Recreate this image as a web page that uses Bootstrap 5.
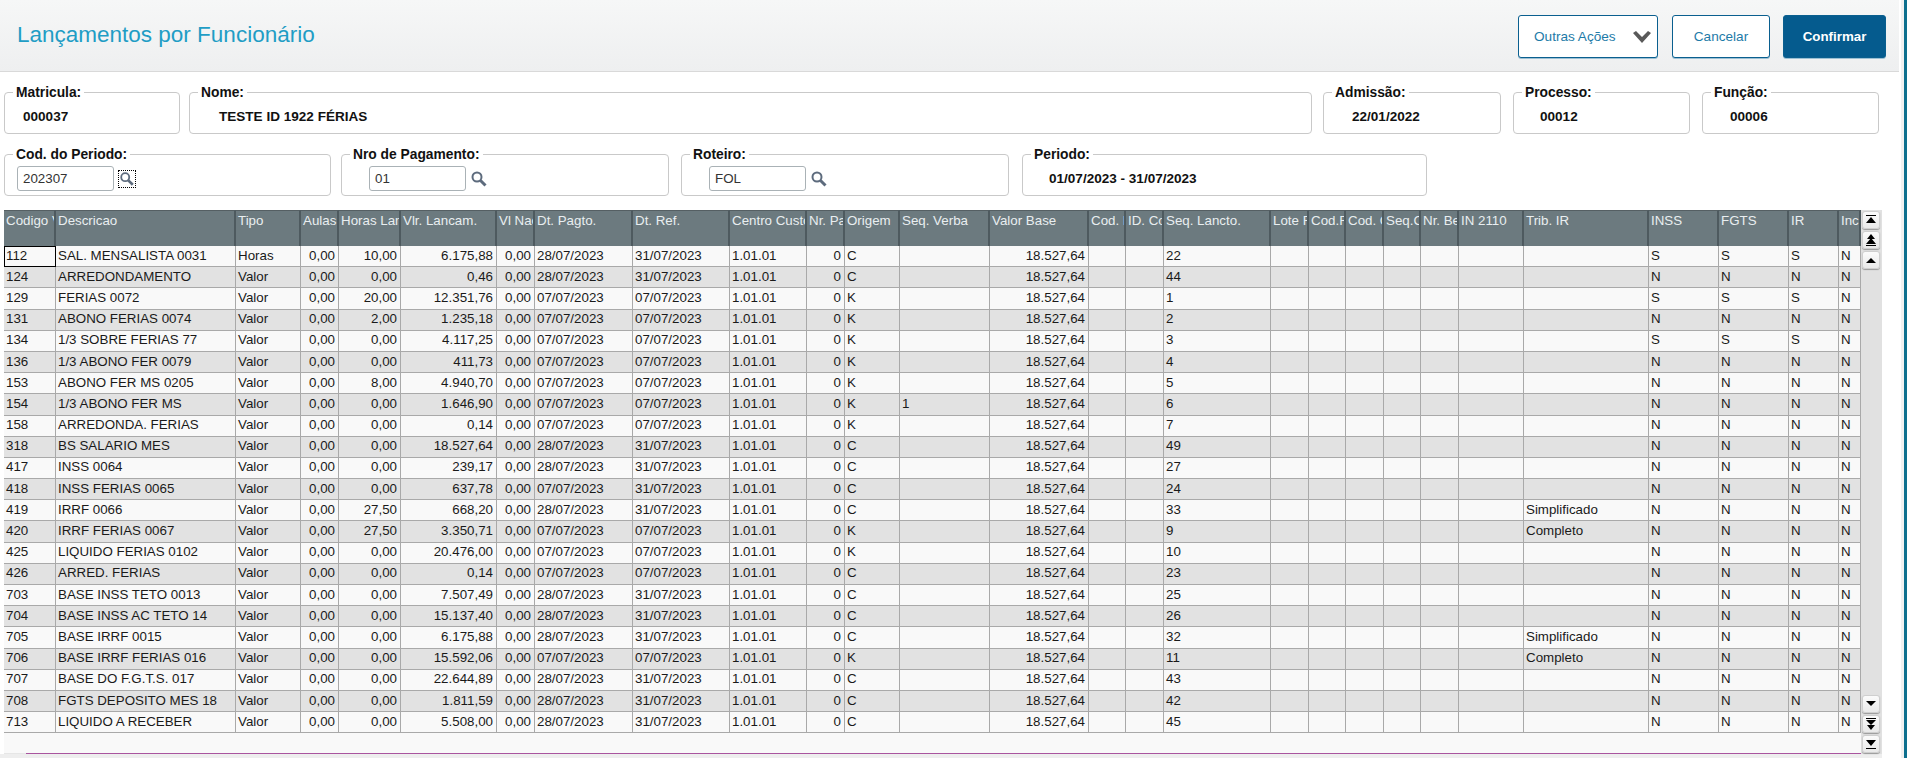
<!DOCTYPE html>
<html lang="pt-BR">
<head>
<meta charset="utf-8">
<title>Lançamentos por Funcionário</title>
<link href="https://cdn.jsdelivr.net/npm/bootstrap@5.3.0/dist/css/bootstrap.min.css" rel="stylesheet">
<style>
html,body{height:758px;overflow:hidden}
body{font-family:"Liberation Sans",Arial,sans-serif;font-size:13.33px;color:#111;background:#fff}
.app-shell{height:758px;position:relative}
.edge-strip{width:6px;background:linear-gradient(90deg,#f1f1f1 3px,#0d6f8e 3px);height:758px;flex:none}
.app-main{width:1901px;flex:none;height:758px}
.top-bar{width:1899px;height:72px;background:linear-gradient(#f6f7f7,#eeeff0);border-bottom:1px solid #d9d9d9;padding:15px 13px 0 17px}
.page-title{font-size:22.5px;font-weight:400;color:#1f9dc5;margin:0;line-height:40px}
.act-btn{height:43px;border:1px solid #0a5f8f;border-radius:3px;background:#fff;color:#1d7ba8;font-size:13.6px;line-height:41px;padding:0;text-align:center;box-shadow:0 1px 0 #9cc0d4}
.act-more{width:140px;margin-right:14px;padding-left:15px;justify-content:space-between;padding-right:6px}
.act-cancel{width:98px;margin-right:13px}
.act-ok{width:103px;background:#055b8e;color:#fff;font-weight:700;font-size:13.33px}
.field-row{height:65px;padding-left:4px}
.field-row-a{padding-top:11px;height:73px}
.field-box{margin:0;padding:0;border:1px solid #c9c9c9;border-radius:4px;min-width:0;flex:none;background:#fff;height:51px}
.field-box legend{float:none;width:auto;font-size:13.8px;font-weight:700;line-height:16px;margin:0 0 0 8px;padding:2px 3px 0;color:#111}
.fld-val{font-weight:700;font-size:13.55px;line-height:16px;margin-top:8px}
.fld-line{display:flex;align-items:center;margin-top:3px}
.fld-input{height:25px;width:97px;border:1px solid #aab2b6;border-radius:3px;padding:0 5px;font-size:13.33px;line-height:23px;color:#333;background:#fff}
.w-mat{width:176px;margin-right:9px}.w-nom{width:1123px;margin-right:11px}.w-adm{width:178px;margin-right:12px}.w-pro{width:177px;margin-right:12px}.w-fun{width:177px}
.w-cod{width:327px;margin-right:10px}.w-nro{width:328px;margin-right:12px}.w-rot{width:328px;margin-right:13px}.w-per{width:405px}
.i-mat{padding-left:18px}.i-nom{padding-left:29px}.i-adm{padding-left:28px}.i-pro{padding-left:26px}.i-fun{padding-left:27px}
.i-cod{padding-left:12px}.i-nro{padding-left:27px}.i-rot{padding-left:27px}.i-per{padding-left:26px}
.find-ico{width:18px;height:18px;margin-left:4px;flex:none}
.find-focus{border:1px dotted #000}
.grid-wrap{height:544px;padding-left:4px;width:1882px}
.grid-area{width:1857px;height:544px;background:linear-gradient(90deg,#e6e6e6 22px,#a9559f 22px) bottom/100% 1px no-repeat,#f9f9f9;overflow:hidden;flex:none}
.lanc-grid{table-layout:fixed;border-collapse:separate;border-spacing:0;width:1857px;font-size:13.33px}
.lanc-grid th{height:36px;background:#6c7a7f;color:#e9eef0;font-weight:400;vertical-align:top;padding:2px 0 0 2px;white-space:nowrap;overflow:hidden;border-right:2px solid #4e5a5f;line-height:15px}
.lanc-grid thead tr:first-child th{border-top:1px solid #555f63}
.lanc-grid td{height:21.2px;padding:0 3px 1px 2px;white-space:nowrap;overflow:hidden;border-right:1px solid #a9a9a9;border-bottom:1px solid #a9a9a9;line-height:18px;color:#1a1a1a}
.lanc-grid tbody tr:nth-child(odd) td{background:#f9f9f9}
.lanc-grid tbody tr:nth-child(even) td{background:#e2e2e2}
.lanc-grid td.num{text-align:right}
.lanc-grid td.cur{outline:1px solid #000;outline-offset:-1px}
.c1{width:52px}.c2{width:180px}.c3{width:65px}.c4{width:38px}.c5{width:62px}.c6{width:96px}.c7{width:38px}.c8{width:98px}.c9{width:97px}.c10{width:77px}.c11{width:38px}.c12{width:55px}.c13{width:90px}.c14{width:99px}.c15{width:37px}.c16{width:38px}.c17{width:107px}.c18{width:38px}.c19{width:37px}.c20{width:38px}.c21{width:37px}.c22{width:38px}.c23{width:65px}.c24{width:125px}.c25{width:70px}.c26{width:70px}.c27{width:50px}.c28{width:22px}
.scroll-col{width:21px;height:544px;background:#e1e1e1;flex:none;padding:1px 2px 1px 1px}
.scroll-btn{width:18px;height:18px;background:linear-gradient(#fbfbfb,#e9e9e9);border:1px solid #cfcfcf;border-radius:3px;box-shadow:0 1px 1px #999;padding:0;display:flex;align-items:center;justify-content:center}
.scroll-btn svg{display:block;width:12px;height:12px}
.scroll-set{gap:2px}
.foot-bar{height:4px;width:1882px;background:#eeeeee}
</style>
</head>
<body>
<div class="app-shell d-flex">
<div class="app-main">
<header class="top-bar d-flex justify-content-between align-items-start">
<h1 class="page-title">Lançamentos por Funcionário</h1>
<div class="d-flex">
<button type="button" class="act-btn act-more d-flex align-items-center"><span>Outras Ações</span><svg width="18" height="12" viewBox="0 0 18 12"><path d="M0 2L3 0l6 6 6-6 3 2-9 10z" fill="#595959"/></svg></button>
<button type="button" class="act-btn act-cancel">Cancelar</button>
<button type="button" class="act-btn act-ok">Confirmar</button>
</div>
</header>
<div class="field-row field-row-a d-flex">
<fieldset class="field-box w-mat"><legend>Matricula:</legend><div class="fld-val i-mat">000037</div></fieldset>
<fieldset class="field-box w-nom"><legend>Nome:</legend><div class="fld-val i-nom">TESTE ID 1922 FÉRIAS</div></fieldset>
<fieldset class="field-box w-adm"><legend>Admissão:</legend><div class="fld-val i-adm">22/01/2022</div></fieldset>
<fieldset class="field-box w-pro"><legend>Processo:</legend><div class="fld-val i-pro">00012</div></fieldset>
<fieldset class="field-box w-fun"><legend>Função:</legend><div class="fld-val i-fun">00006</div></fieldset>
</div>
<div class="field-row d-flex">
<fieldset class="field-box w-cod"><legend>Cod. do Periodo:</legend><div class="fld-line i-cod"><div class="fld-input">202307</div><svg class="find-ico find-focus" viewBox="0 0 18 18"><circle cx="7" cy="7" r="4.5" fill="#fff" stroke="#5d6b7d" stroke-width="2"/><path d="M10.5 10.5l5 5" stroke="#5d6b7d" stroke-width="3"/></svg></div></fieldset>
<fieldset class="field-box w-nro"><legend>Nro de Pagamento:</legend><div class="fld-line i-nro"><div class="fld-input">01</div><svg class="find-ico" viewBox="0 0 18 18"><circle cx="7" cy="7" r="4.5" fill="#fff" stroke="#5d6b7d" stroke-width="2"/><path d="M10.5 10.5l5 5" stroke="#5d6b7d" stroke-width="3"/></svg></div></fieldset>
<fieldset class="field-box w-rot"><legend>Roteiro:</legend><div class="fld-line i-rot"><div class="fld-input">FOL</div><svg class="find-ico" viewBox="0 0 18 18"><circle cx="7" cy="7" r="4.5" fill="#fff" stroke="#5d6b7d" stroke-width="2"/><path d="M10.5 10.5l5 5" stroke="#5d6b7d" stroke-width="3"/></svg></div></fieldset>
<fieldset class="field-box w-per"><legend>Periodo:</legend><div class="fld-val i-per">01/07/2023 - 31/07/2023</div></fieldset>
</div>
<div class="grid-wrap d-flex">
<div class="grid-area">
<table class="lanc-grid" id="grid"><colgroup id="cols"></colgroup><thead><tr id="head"></tr></thead><tbody id="rows"></tbody></table>
</div>
<div class="scroll-col d-flex flex-column justify-content-between">
<div class="scroll-set d-flex flex-column">
<button type="button" class="scroll-btn"><svg viewBox="0 0 12 12"><path d="M1 1h10v1H1zM6 3l5 6H1z" fill="#000"/></svg></button>
<button type="button" class="scroll-btn"><svg viewBox="0 0 12 12"><path d="M6 0l4 5H2zM6 4l5 6H1zM1 11h10v1H1z" fill="#000"/></svg></button>
<button type="button" class="scroll-btn"><svg viewBox="0 0 12 12"><path d="M6 4l5 5H1z" fill="#000"/></svg></button>
</div>
<div class="scroll-set d-flex flex-column">
<button type="button" class="scroll-btn"><svg viewBox="0 0 12 12"><path d="M1 3h10L6 8z" fill="#000"/></svg></button>
<button type="button" class="scroll-btn"><svg viewBox="0 0 12 12"><path d="M1 0h10v1H1zM1 2h10L6 7zM2 7h8l-4 5z" fill="#000"/></svg></button>
<button type="button" class="scroll-btn"><svg viewBox="0 0 12 12"><path d="M1 2h10L6 8zM1 10h10v1H1z" fill="#000"/></svg></button>
</div>
</div>
</div>
<div class="foot-bar"></div>
</div>
<div class="edge-strip"></div>
</div>
<script src="https://cdn.jsdelivr.net/npm/bootstrap@5.3.0/dist/js/bootstrap.bundle.min.js"></script>
<script>
var heads=["Codigo Verba","Descricao","Tipo","Aulas","Horas Lanc.","Vlr. Lancam.","Vl Nao","Dt. Pagto.","Dt. Ref.","Centro Custo","Nr. Pag","Origem","Seq. Verba","Valor Base","Cod. Dep","ID. Cont","Seq. Lancto.","Lote Fol","Cod.Ref","Cod. Cta","Seq.Cta","Nr. Ben","IN 2110","Trib. IR","INSS","FGTS","IR","Inc"];
var data=[
[112,"SAL. MENSALISTA 0031","Horas","10,00","6.175,88","28/07/2023","31/07/2023","C","",22,"","S","S","S"],
[124,"ARREDONDAMENTO","Valor","0,00","0,46","28/07/2023","31/07/2023","C","",44,"","N","N","N"],
[129,"FERIAS 0072","Valor","20,00","12.351,76","07/07/2023","07/07/2023","K","",1,"","S","S","S"],
[131,"ABONO FERIAS 0074","Valor","2,00","1.235,18","07/07/2023","07/07/2023","K","",2,"","N","N","N"],
[134,"1/3 SOBRE FERIAS 77","Valor","0,00","4.117,25","07/07/2023","07/07/2023","K","",3,"","S","S","S"],
[136,"1/3 ABONO FER 0079","Valor","0,00","411,73","07/07/2023","07/07/2023","K","",4,"","N","N","N"],
[153,"ABONO FER MS 0205","Valor","8,00","4.940,70","07/07/2023","07/07/2023","K","",5,"","N","N","N"],
[154,"1/3 ABONO FER MS","Valor","0,00","1.646,90","07/07/2023","07/07/2023","K","1",6,"","N","N","N"],
[158,"ARREDONDA. FERIAS","Valor","0,00","0,14","07/07/2023","07/07/2023","K","",7,"","N","N","N"],
[318,"BS SALARIO MES","Valor","0,00","18.527,64","28/07/2023","31/07/2023","C","",49,"","N","N","N"],
[417,"INSS 0064","Valor","0,00","239,17","28/07/2023","31/07/2023","C","",27,"","N","N","N"],
[418,"INSS FERIAS 0065","Valor","0,00","637,78","07/07/2023","31/07/2023","C","",24,"","N","N","N"],
[419,"IRRF 0066","Valor","27,50","668,20","28/07/2023","31/07/2023","C","",33,"Simplificado","N","N","N"],
[420,"IRRF FERIAS 0067","Valor","27,50","3.350,71","07/07/2023","07/07/2023","K","",9,"Completo","N","N","N"],
[425,"LIQUIDO FERIAS 0102","Valor","0,00","20.476,00","07/07/2023","07/07/2023","K","",10,"","N","N","N"],
[426,"ARRED. FERIAS","Valor","0,00","0,14","07/07/2023","07/07/2023","C","",23,"","N","N","N"],
[703,"BASE INSS TETO 0013","Valor","0,00","7.507,49","28/07/2023","31/07/2023","C","",25,"","N","N","N"],
[704,"BASE INSS AC TETO 14","Valor","0,00","15.137,40","28/07/2023","31/07/2023","C","",26,"","N","N","N"],
[705,"BASE IRRF 0015","Valor","0,00","6.175,88","28/07/2023","31/07/2023","C","",32,"Simplificado","N","N","N"],
[706,"BASE IRRF FERIAS 016","Valor","0,00","15.592,06","07/07/2023","07/07/2023","K","",11,"Completo","N","N","N"],
[707,"BASE DO F.G.T.S. 017","Valor","0,00","22.644,89","28/07/2023","31/07/2023","C","",43,"","N","N","N"],
[708,"FGTS DEPOSITO MES 18","Valor","0,00","1.811,59","28/07/2023","31/07/2023","C","",42,"","N","N","N"],
[713,"LIQUIDO A RECEBER","Valor","0,00","5.508,00","28/07/2023","31/07/2023","C","",45,"","N","N","N"]];
var cols=document.getElementById("cols"),head=document.getElementById("head"),rows=document.getElementById("rows");
heads.forEach(function(h,i){var c=document.createElement("col");c.className="c"+(i+1);cols.appendChild(c);var t=document.createElement("th");t.textContent=h;head.appendChild(t);});
var numeric={3:1,4:1,5:1,6:1,10:1,13:1};
data.forEach(function(d,r){
var v=[d[0],d[1],d[2],"0,00",d[3],d[4],"0,00",d[5],d[6],"1.01.01","0",d[7],d[8],"18.527,64","","",d[9],"","","","","","",d[10],d[11],d[12],d[13],"N"];
var tr=document.createElement("tr");
v.forEach(function(x,i){var td=document.createElement("td");td.textContent=x;if(numeric[i])td.className="num";if(r===0&&i===0)td.className="cur";tr.appendChild(td);});
rows.appendChild(tr);});
</script>
</body>
</html>
